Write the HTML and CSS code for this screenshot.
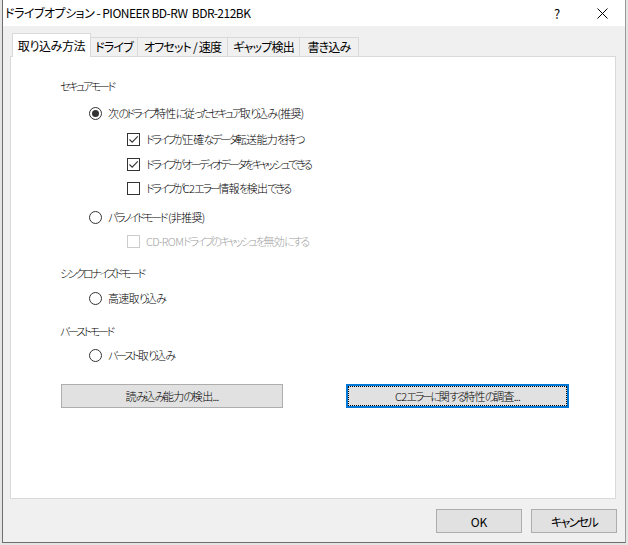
FILE: index.html
```html
<!DOCTYPE html>
<html lang="ja">
<head>
<meta charset="utf-8">
<title>ドライブオプション</title>
<link rel="stylesheet" href="styles.css">
</head>
<body>
<div class="window">
  <div class="titlebar">
    <span class="title">ドライブオプション - PIONEER BD-RW&nbsp; BDR-212BK</span>
    <span class="tb-btn help">?</span>
    <span class="tb-btn close"><svg width="11" height="11" viewBox="0 0 11 11"><path d="M0.5 0.5 L10.5 10.5 M10.5 0.5 L0.5 10.5" stroke="#000" stroke-width="1" fill="none"/></svg></span>
  </div>
  <div class="tabs">
    <div class="tab active t1">取り込み方法</div>
    <div class="tab t2">ドライブ</div>
    <div class="tab t3">オフセット / 速度</div>
    <div class="tab t4">ギャップ検出</div>
    <div class="tab t5">書き込み</div>
  </div>
  <div class="panel">
    <div class="row lbl first"><span class="txt">セキュアモード</span></div>
    <div class="row lv1 g3"><span class="radio on"></span><span class="txt"><span class="k">次</span>のドライブ<span class="k">特性</span>に<span class="k">従</span>ったセキュア<span class="k">取</span>り<span class="k">込</span>み<span class="k"> (推奨)</span></span></div>
    <div class="row lv2 g2"><span class="check"><svg width="11" height="11" viewBox="0 0 11 11"><path d="M1.5 5.5 L4.2 8.2 L9.8 2.3" stroke="#333" stroke-width="1.1" fill="none"/></svg></span><span class="txt">ドライブが<span class="k">正確</span>なデータ<span class="k">転送能力</span>を<span class="k">持</span>つ</span></div>
    <div class="row lv2 g1"><span class="check"><svg width="11" height="11" viewBox="0 0 11 11"><path d="M1.5 5.5 L4.2 8.2 L9.8 2.3" stroke="#333" stroke-width="1.1" fill="none"/></svg></span><span class="txt">ドライブがオーディオデータをキャッシュできる</span></div>
    <div class="row lv2 g0"><span class="check"></span><span class="txt">ドライブが<span class="k">C2</span>エラー<span class="k">情報</span>を<span class="k">検出</span>できる</span></div>
    <div class="row lv1 g5"><span class="radio"></span><span class="txt">パラノイドモード<span class="k"> (非推奨)</span></span></div>
    <div class="row lv2 g0 disabled"><span class="check"></span><span class="txt"><span class="k">CD-ROM</span>ドライブのキャッシュを<span class="k">無効</span>にする</span></div>
    <div class="row lbl g8"><span class="txt">シンクロナイズドモード</span></div>
    <div class="row lv1 g1"><span class="radio"></span><span class="txt"><span class="k">高速取</span>り<span class="k">込</span>み</span></div>
    <div class="row lbl g9"><span class="txt">バーストモード</span></div>
    <div class="row lv1 g0"><span class="radio"></span><span class="txt">バースト<span class="k">取</span>り<span class="k">込</span>み</span></div>
    <div class="btnrow">
      <button class="btn wide"><span class="k">読</span>み<span class="k">込</span>み<span class="k">能力</span>の<span class="k">検出...</span></button>
      <button class="btn wide focus"><span class="k">C2</span>エラーに<span class="k">関</span>する<span class="k">特性</span>の<span class="k">調査...</span></button>
    </div>
  </div>
  <div class="footer">
    <button class="btn small">OK</button>
    <button class="btn small tight">キャンセル</button>
  </div>
</div>
</body>
</html>
```
FILE: styles.css
```css
html, body {
  margin: 0;
  padding: 0;
}
body {
  width: 628px;
  height: 545px;
  background: #e4e4e4;
  overflow: hidden;
  font-family: "Noto Sans CJK JP", "Noto Sans", sans-serif;
  font-feature-settings: "palt";
  color: #000;
}
.window {
  margin-left: 2px;
  width: 622px;
  height: 542px;
  background: #f0f0f0;
  border-left: 1px solid #6e6e6e;
  border-right: 1px solid #9a9a9a;
  border-bottom: 1px solid #6e6e6e;
  display: flex;
  flex-direction: column;
}
.titlebar {
  height: 26px;
  background: #fff;
  display: flex;
  align-items: center;
  flex-shrink: 0;
}
.title {
  font-size: 12px;
  padding-left: 2px;
  letter-spacing: -0.5px;
  flex: 1;
  line-height: 26px;
}
.tb-btn {
  display: flex;
  align-items: center;
  justify-content: center;
  height: 26px;
}
.help {
  width: 20px;
  font-size: 13px;
  margin-right: 25px;
}
.close {
  width: 20px;
  margin-right: 13px;
}
.tabs {
  height: 30px;
  display: flex;
  align-items: flex-end;
  padding-left: 9px;
  flex-shrink: 0;
  position: relative;
  z-index: 1;
}
.tab {
  box-sizing: border-box;
  height: 19px;
  border: 1px solid #d9d9d9;
  border-bottom: none;
  margin-left: -1px;
  background: #f0f0f0;
  font-size: 12px;
  letter-spacing: -0.8px;
  display: flex;
  align-items: center;
  justify-content: center;
  line-height: 1;
}
.tab.active {
  height: 24px;
  margin-bottom: -1px;
  background: #fff;
  margin-left: 0;
  font-size: 12px;
  letter-spacing: -0.4px;
}
.t1 { width: 79px; }
.t2 { width: 48px; }
.t3 { width: 91px; }
.t4 { width: 73px; }
.t5 { width: 60px; }
.panel {
  box-sizing: border-box;
  margin: 0 9px 0 7px;
  height: 443px;
  background: #fff;
  border: 1px solid #d9d9d9;
  padding-top: 17px;
  flex-shrink: 0;
  display: flex;
  flex-direction: column;
}
.row {
  height: 24px;
  display: flex;
  align-items: center;
  font-size: 11px;
  letter-spacing: -2.3px;
  font-weight: 300;
}
.k { letter-spacing: -0.7px; }
.lbl { padding-left: 49px; }
.lv1 { padding-left: 78px; }
.lv2 { padding-left: 116px; }
.g0 { margin-top: 0; }
.g1 { margin-top: 1px; }
.g2 { margin-top: 2px; }
.g3 { margin-top: 3px; }
.g5 { margin-top: 5px; }
.g8 { margin-top: 8px; }
.g9 { margin-top: 9px; }
.radio {
  box-sizing: border-box;
  width: 13px;
  height: 13px;
  border: 1px solid #333;
  border-radius: 50%;
  display: flex;
  align-items: center;
  justify-content: center;
  margin-right: 6px;
  flex-shrink: 0;
}
.radio.on::after {
  content: "";
  width: 7px;
  height: 7px;
  border-radius: 50%;
  background: #333;
}
.check {
  box-sizing: border-box;
  width: 13px;
  height: 13px;
  border: 1px solid #333;
  background: #fff;
  margin-right: 6px;
  flex-shrink: 0;
  display: flex;
  align-items: center;
  justify-content: center;
}
.disabled .check { border-color: #cccccc; }
.disabled .txt { color: #a0a0a0; }
.btnrow {
  margin-top: 17px;
  display: flex;
  padding-left: 50px;
  gap: 63px;
}
.btn {
  box-sizing: border-box;
  height: 24px;
  background: #e1e1e1;
  border: 1px solid #adadad;
  font-family: "Noto Sans CJK JP", "Noto Sans", sans-serif;
  font-feature-settings: "palt";
  font-size: 11px;
  font-weight: 300;
  letter-spacing: -2.3px;
  color: #000;
  padding: 0;
  margin: 0;
}
.wide { width: 222px; }
.focus {
  width: 223px;
  border: 2px solid #0078d7;
  outline: 1px dotted #000;
  outline-offset: -3px;
}
.footer {
  display: flex;
  justify-content: flex-end;
  gap: 9px;
  padding: 10px 8px 0 0;
}
.small {
  width: 86px;
  font-size: 12px;
  font-weight: 400;
  letter-spacing: 0;
}
.small.tight { letter-spacing: -1.6px; }
```
